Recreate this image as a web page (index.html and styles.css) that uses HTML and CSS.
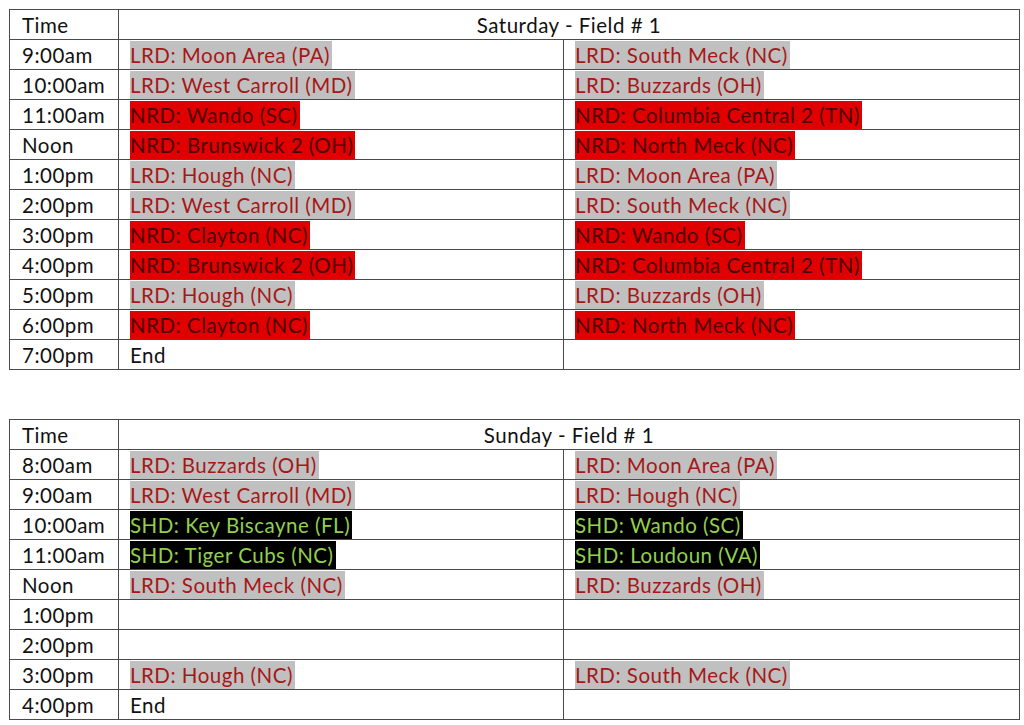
FILE: index.html
```html
<!DOCTYPE html>
<html>
<head>
<meta charset="utf-8">
<link rel="stylesheet" href="styles.css">
</head>
<body>
<div class="page">
<table class="sched">
<colgroup><col class="c1"><col class="c2"><col class="c3"></colgroup>
<tr><td>Time</td><td colspan="2" class="head">Saturday - Field # 1</td></tr>
<tr><td>9:00am</td><td><span class="lrd">LRD: Moon Area (PA)</span></td><td><span class="lrd">LRD: South Meck (NC)</span></td></tr>
<tr><td>10:00am</td><td><span class="lrd">LRD: West Carroll (MD)</span></td><td><span class="lrd">LRD: Buzzards (OH)</span></td></tr>
<tr><td>11:00am</td><td><span class="nrd">NRD: Wando (SC)</span></td><td><span class="nrd">NRD: Columbia Central 2 (TN)</span></td></tr>
<tr><td>Noon</td><td><span class="nrd">NRD: Brunswick 2 (OH)</span></td><td><span class="nrd">NRD: North Meck (NC)</span></td></tr>
<tr><td>1:00pm</td><td><span class="lrd">LRD: Hough (NC)</span></td><td><span class="lrd">LRD: Moon Area (PA)</span></td></tr>
<tr><td>2:00pm</td><td><span class="lrd">LRD: West Carroll (MD)</span></td><td><span class="lrd">LRD: South Meck (NC)</span></td></tr>
<tr><td>3:00pm</td><td><span class="nrd">NRD: Clayton (NC)</span></td><td><span class="nrd">NRD: Wando (SC)</span></td></tr>
<tr><td>4:00pm</td><td><span class="nrd">NRD: Brunswick 2 (OH)</span></td><td><span class="nrd">NRD: Columbia Central 2 (TN)</span></td></tr>
<tr><td>5:00pm</td><td><span class="lrd">LRD: Hough (NC)</span></td><td><span class="lrd">LRD: Buzzards (OH)</span></td></tr>
<tr><td>6:00pm</td><td><span class="nrd">NRD: Clayton (NC)</span></td><td><span class="nrd">NRD: North Meck (NC)</span></td></tr>
<tr><td>7:00pm</td><td>End</td><td></td></tr>
</table>

<table class="sched second">
<colgroup><col class="c1"><col class="c2"><col class="c3"></colgroup>
<tr><td>Time</td><td colspan="2" class="head">Sunday - Field # 1</td></tr>
<tr><td>8:00am</td><td><span class="lrd">LRD: Buzzards (OH)</span></td><td><span class="lrd">LRD: Moon Area (PA)</span></td></tr>
<tr><td>9:00am</td><td><span class="lrd">LRD: West Carroll (MD)</span></td><td><span class="lrd">LRD: Hough (NC)</span></td></tr>
<tr><td>10:00am</td><td><span class="shd">SHD: Key Biscayne (FL)</span></td><td><span class="shd">SHD: Wando (SC)</span></td></tr>
<tr><td>11:00am</td><td><span class="shd">SHD: Tiger Cubs (NC)</span></td><td><span class="shd">SHD: Loudoun (VA)</span></td></tr>
<tr><td>Noon</td><td><span class="lrd">LRD: South Meck (NC)</span></td><td><span class="lrd">LRD: Buzzards (OH)</span></td></tr>
<tr><td>1:00pm</td><td></td><td></td></tr>
<tr><td>2:00pm</td><td></td><td></td></tr>
<tr><td>3:00pm</td><td><span class="lrd">LRD: Hough (NC)</span></td><td><span class="lrd">LRD: South Meck (NC)</span></td></tr>
<tr><td>4:00pm</td><td>End</td><td></td></tr>
</table>
</div>
</body>
</html>
```

FILE: styles.css
```css
html, body {
  margin: 0;
  padding: 0;
  background: #ffffff;
}

.page {
  padding: 9px 0 0 9px;
  font-family: "Lato", "Open Sans", sans-serif;
  font-size: 20.5px;
  letter-spacing: 0.5px;
  color: #111111;
}

.sched {
  border-collapse: collapse;
  table-layout: fixed;
  width: 1010px;
}

.sched.second {
  margin-top: 49px;
}

.c1 { width: 109px; }
.c2 { width: 445px; }
.c3 { width: 456px; }

.sched tr {
  height: 30px;
}

.sched td {
  border: 1px solid #4a4a4a;
  height: 28px;
  padding: 0 0 0 11px;
  line-height: 28px;
  vertical-align: middle;
  white-space: nowrap;
  overflow: hidden;
}

.sched td:first-child {
  padding-left: 12px;
}

.sched td.head {
  text-align: center;
  padding-left: 0;
}

.lrd, .nrd, .shd {
  display: inline-block;
  height: 28px;
  line-height: 28px;
  padding-right: 2px;
  vertical-align: top;
}

.lrd {
  background: #c0c0c0;
  color: #a51818;
}

.nrd {
  background: #e00000;
  color: #4a0000;
}

.shd {
  background: #000000;
  color: #92d050;
}
```
